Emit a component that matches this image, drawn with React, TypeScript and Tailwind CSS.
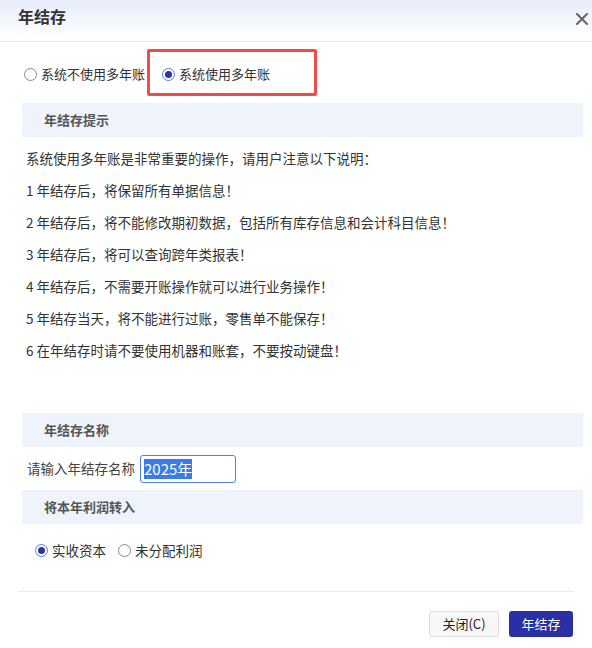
import React from "react"

const font = { fontFamily: '"Noto Sans CJK SC", "Noto Sans", sans-serif' }

const tips = [
  "系统使用多年账是非常重要的操作，请用户注意以下说明：",
  "1 年结存后，将保留所有单据信息！",
  "2 年结存后，将不能修改期初数据，包括所有库存信息和会计科目信息！",
  "3 年结存后，将可以查询跨年类报表！",
  "4 年结存后，不需要开账操作就可以进行业务操作！",
  "5 年结存当天，将不能进行过账，零售单不能保存！",
  "6 在年结存时请不要使用机器和账套，不要按动键盘！",
]

function Radio({ checked }: { checked?: boolean }) {
  if (checked) {
    return (
      <span className="flex h-[13px] w-[13px] shrink-0 items-center justify-center rounded-full border border-[#5b7be0] bg-white">
        <span className="h-[7px] w-[7px] rounded-full bg-[#2a35a6]" />
      </span>
    )
  }
  return <span className="h-[13px] w-[13px] shrink-0 rounded-full border border-[#8a8a8a] bg-white" />
}

function SectionBar({ title }: { title: string }) {
  return (
    <div className="ml-[22px] mr-[9px] flex h-[34px] items-center bg-[#eff4fc] pl-[22px] text-[13px] font-bold text-[#555]">
      {title}
    </div>
  )
}

export default function App() {
  return (
    <div className="relative h-[648px] w-[592px] overflow-hidden bg-white text-[#333]" style={font}>
      {/* header */}
      <div className="flex h-[42px] items-start justify-between border-b border-[#e6e9ef] bg-gradient-to-b from-[#e7edfb] to-white">
        <div className="ml-[18px] mt-[3px] text-[16px] font-bold leading-[26px] text-[#333]">年结存</div>
        <svg className="mr-[4px] mt-[13px]" width="12" height="12" viewBox="0 0 12 12">
          <path d="M1 1 L11 11 M11 1 L1 11" stroke="#666" strokeWidth="2" strokeLinecap="square" />
        </svg>
      </div>

      {/* multi-year radio row */}
      <div className="relative mt-[22px] flex h-[20px] items-center text-[13px]">
        <label className="ml-[24px] flex items-center gap-[4px]">
          <Radio />
          <span>系统不使用多年账</span>
        </label>
        <label className="ml-[17px] flex items-center gap-[4px]">
          <Radio checked />
          <span>系统使用多年账</span>
        </label>
        <div className="pointer-events-none absolute left-[147px] top-[-15px] h-[47px] w-[170px] rounded-[2px] border-[3px] border-[#f24b4b]" />
      </div>

      <div className="mt-[19px]">
        <SectionBar title="年结存提示" />
      </div>

      <div className="mt-[5px] pl-[26px] text-[13.5px] leading-[32px] text-[#333]">
        {tips.map((t) => (
          <div key={t}>{t}</div>
        ))}
      </div>

      <div className="mt-[47px]">
        <SectionBar title="年结存名称" />
      </div>

      <div className="flex h-[43px] items-center pl-[27px] text-[13.5px] text-[#444]">
        <span>请输入年结存名称</span>
        <div className="ml-[5px] flex h-[28px] w-[96px] items-center rounded-[3px] border border-[#4f7fe0] pl-[3px]">
          <span className="bg-[#3a7be9] text-[15px] leading-[20px] text-white">2025年</span>
        </div>
      </div>

      <SectionBar title="将本年利润转入" />

      <div className="mt-[16px] flex h-[20px] items-center text-[13.5px]">
        <label className="ml-[35px] flex items-center gap-[4px]">
          <Radio checked />
          <span>实收资本</span>
        </label>
        <label className="ml-[12px] flex items-center gap-[4px]">
          <Radio />
          <span>未分配利润</span>
        </label>
      </div>

      <div className="mx-[18px] mt-[31px] border-t border-[#ececec]" />

      <div className="mt-[19px] flex justify-end gap-[10px] pr-[19px] text-[13px]">
        <button className="h-[26px] w-[70px] rounded-[3px] border border-[#dedede] bg-[#f7f7f7] text-[#222]">
          关闭(C)
        </button>
        <button className="h-[26px] w-[64px] rounded-[3px] bg-[#2b2fa5] text-white">年结存</button>
      </div>
    </div>
  )
}
